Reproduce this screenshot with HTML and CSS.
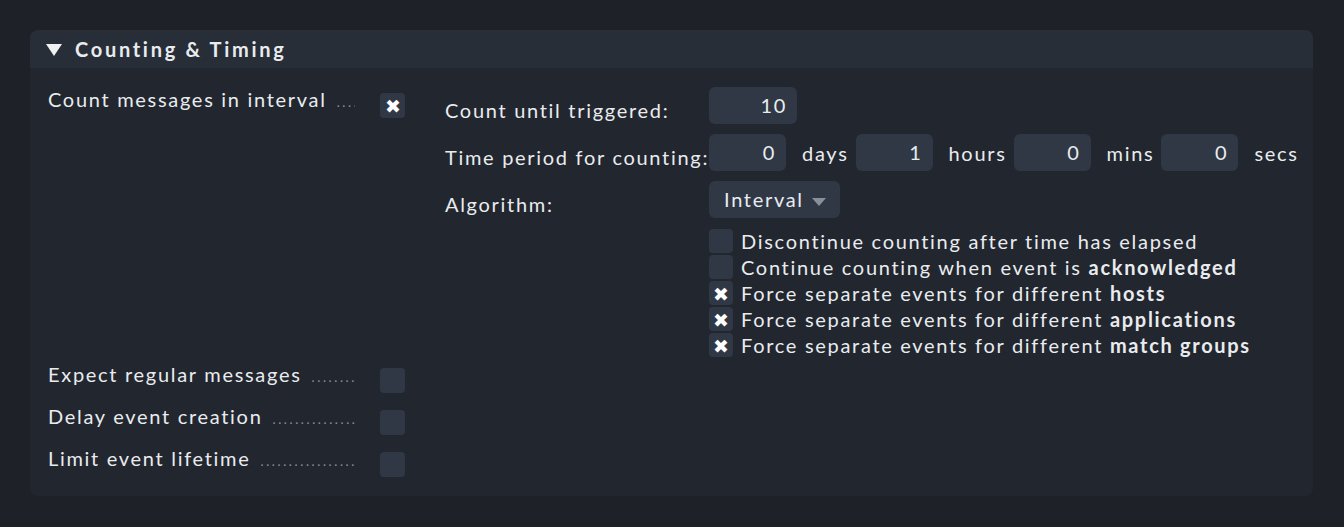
FILE: index.html
```html
<!DOCTYPE html>
<html>
<head>
<meta charset="utf-8">
<link rel="stylesheet" href="styles.css">
</head>
<body>
<div class="panel">
  <div class="panel-head"><span class="tri"></span><span class="title">Counting &amp; Timing</span></div>
  <div class="panel-body">
    <div class="row row-main">
      <div class="legend"><span class="ltext">Count messages in interval</span><span class="dots">..............................................</span></div>
      <span class="cb checked">&#10006;</span>
      <div class="content">
        <div class="field">
          <span class="flabel">Count until triggered:</span>
          <span class="input w88">10</span>
        </div>
        <div class="field">
          <span class="flabel">Time period for counting:</span>
          <span class="input w77">0</span><span class="unit">days</span>
          <span class="input w77">1</span><span class="unit">hours</span>
          <span class="input w77">0</span><span class="unit">mins</span>
          <span class="input w77">0</span><span class="unit">secs</span>
        </div>
        <div class="field">
          <span class="flabel">Algorithm:</span>
          <span class="select">Interval<span class="caret"></span></span>
        </div>
        <div class="checks">
          <div class="check"><span class="cb small"></span><span>Discontinue counting after time has elapsed</span></div>
          <div class="check"><span class="cb small"></span><span>Continue counting when event is <b>acknowledged</b></span></div>
          <div class="check"><span class="cb small checked">&#10006;</span><span>Force separate events for different <b>hosts</b></span></div>
          <div class="check"><span class="cb small checked">&#10006;</span><span>Force separate events for different <b>applications</b></span></div>
          <div class="check"><span class="cb small checked">&#10006;</span><span>Force separate events for different <b>match groups</b></span></div>
        </div>
      </div>
    </div>
    <div class="row">
      <div class="legend"><span class="ltext">Expect regular messages</span><span class="dots">..............................................</span></div>
      <span class="cb"></span>
    </div>
    <div class="row">
      <div class="legend"><span class="ltext">Delay event creation</span><span class="dots">..............................................</span></div>
      <span class="cb"></span>
    </div>
    <div class="row">
      <div class="legend"><span class="ltext">Limit event lifetime</span><span class="dots">..............................................</span></div>
      <span class="cb"></span>
    </div>
  </div>
</div>
</body>
</html>
```

FILE: styles.css
```css
html, body {
  margin: 0;
  padding: 0;
  background: #1e2128;
}
body {
  padding: 30px 31px 31px 30px;
  font-family: Lato, "Open Sans", sans-serif;
  color: #e9ecef;
  font-size: 20px;
  letter-spacing: 1.7px;
}
.panel {
  background: #22262e;
  border-radius: 8px;
  height: 466px;
  box-sizing: border-box;
}
.panel-head {
  height: 38px;
  background: #282e38;
  border-radius: 8px 8px 0 0;
  display: flex;
  align-items: center;
  padding-left: 16px;
}
.tri {
  width: 0;
  height: 0;
  border-left: 8px solid transparent;
  border-right: 8px solid transparent;
  border-top: 12px solid #eef0f2;
  margin-right: 13px;
  margin-top: 2px;
}
.title {
  font-weight: bold;
  letter-spacing: 2.7px;
  font-size: 20px;
}
.panel-body {
  padding: 16px 18px 11px 18px;
}
.row {
  display: flex;
  align-items: flex-start;
  height: 42px;
}
.row-main {
  height: auto;
  padding-bottom: 1px;
}
.legend {
  flex: none;
  width: 307px;
  display: flex;
  align-items: baseline;
  margin-top: 5px;
  line-height: 20px;
  overflow: hidden;
  white-space: nowrap;
}
.ltext {
  flex: none;
}
.dots {
  flex: 1;
  overflow: hidden;
  margin-left: 10px;
  color: #8a9099;
  font-size: 13px;
  letter-spacing: 2.6px;
}
.cb {
  flex: none;
  width: 25px;
  height: 25px;
  border-radius: 4px;
  background: #303845;
  margin-left: 25px;
  margin-top: 9px;
  display: flex;
  align-items: center;
  justify-content: center;
  color: #ffffff;
  font-size: 19px;
  line-height: 1;
  letter-spacing: 0;
}
.content {
  margin-left: 40px;
  margin-top: 3px;
}
.field {
  display: flex;
  align-items: center;
  height: 37px;
  margin-bottom: 10px;
}
.flabel {
  width: 264px;
  flex: none;
  padding-top: 8px;
  white-space: nowrap;
}
.input {
  height: 37px;
  box-sizing: border-box;
  background: #303845;
  border-radius: 6px;
  text-align: right;
  padding-right: 10px;
  line-height: 37px;
}
.w88 { width: 88px; }
.w77 { width: 77px; }
.unit {
  margin: 0 7px 0 16px;
}
.select {
  height: 37px;
  width: 131px;
  box-sizing: border-box;
  background: #303845;
  border-radius: 6px;
  display: flex;
  align-items: center;
  padding-left: 15px;
  padding-bottom: 2px;
}
.caret {
  width: 0;
  height: 0;
  border-left: 7px solid transparent;
  border-right: 7px solid transparent;
  border-top: 8px solid #8a9099;
  margin-left: 8px;
  margin-top: 6px;
}
.checks {
  margin-left: 264px;
  margin-top: 0;
}
.check {
  display: flex;
  align-items: center;
  height: 26px;
}
.cb.small {
  width: 24px;
  height: 24px;
  margin: 0 8px 0 0;
  font-size: 19px;
}
.check b {
  font-weight: bold;
}
```
